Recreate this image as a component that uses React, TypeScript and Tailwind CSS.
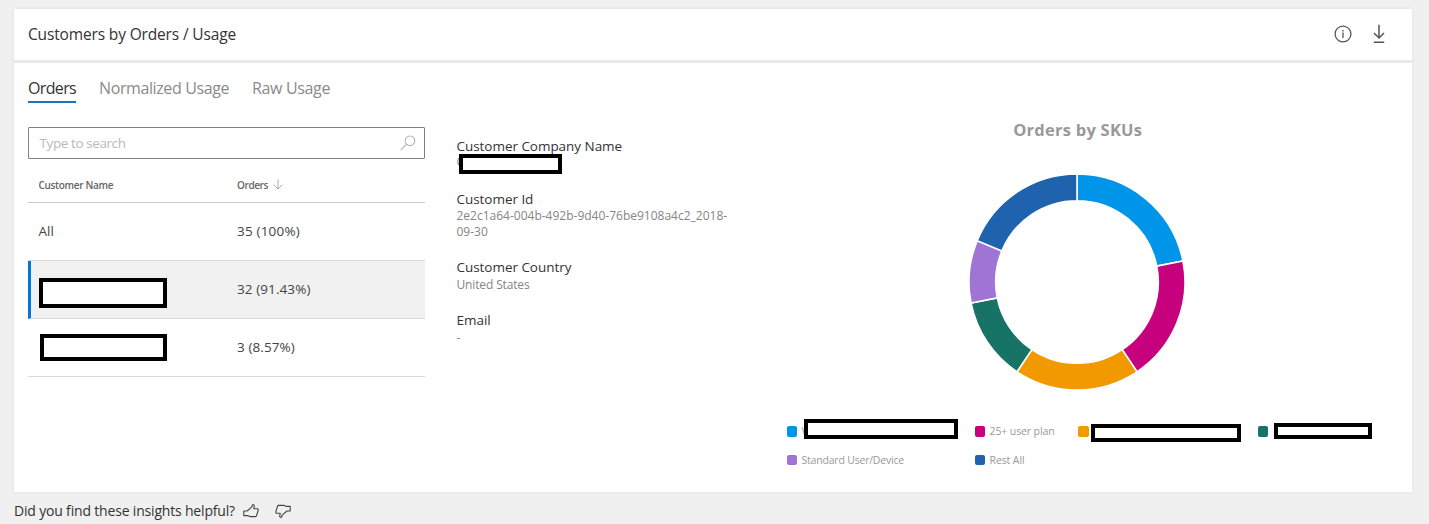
import type { ReactNode } from "react";

const SLICES = [
  { value: 7, color: "#0095e8" },
  { value: 6, color: "#c7007d" },
  { value: 6, color: "#f29900" },
  { value: 4, color: "#177365" },
  { value: 3, color: "#a074d4" },
  { value: 6, color: "#1f63ae" },
];
const TOTAL = 32;

function point(radius: number, share: number) {
  const angle = (share / TOTAL) * Math.PI * 2;
  return `${(108 + radius * Math.sin(angle)).toFixed(2)} ${(108 - radius * Math.cos(angle)).toFixed(2)}`;
}

function Donut() {
  let start = 0;
  return (
    <svg width="216" height="216" viewBox="0 0 216 216" role="img">
      {SLICES.map((slice) => {
        const end = start + slice.value;
        const d = `M${point(108, start)}A108 108 0 0 1 ${point(108, end)}L${point(81.3, end)}A81.3 81.3 0 0 0 ${point(81.3, start)}Z`;
        start = end;
        return <path key={slice.color} d={d} fill={slice.color} stroke="#fff" strokeWidth="1.6" />;
      })}
    </svg>
  );
}

function Redacted({ className }: { className: string }) {
  return <div className={`shrink-0 border-4 border-black bg-white ${className}`} />;
}

function InfoIcon() {
  return (
    <svg width="18" height="18" viewBox="0 0 18 18" fill="none" stroke="#555" strokeWidth="1.3">
      <circle cx="9" cy="9" r="7.9" />
      <path d="M9 7.6V13M9 4.9v1.5" />
    </svg>
  );
}

function DownloadIcon() {
  return (
    <svg width="12" height="20" viewBox="0 0 12 20" fill="none" stroke="#555" strokeWidth="1.5">
      <path d="M6 .8v13.5M1 9l5 5 5-5M.8 18.3h10.4" />
    </svg>
  );
}

function SearchIcon() {
  return (
    <svg width="16" height="16" viewBox="0 0 16 16" fill="none" stroke="#b5b5b5" strokeWidth="1.1">
      <circle cx="10" cy="5.8" r="4.8" />
      <path d="M6.6 9.2.8 15" />
    </svg>
  );
}

function ThumbIcon({ down = false }: { down?: boolean }) {
  return (
    <svg width="16" height="14" viewBox="0 0 16 14" fill="none" stroke="#444" strokeWidth="1.1" strokeLinejoin="round" className={down ? "-scale-100" : ""}>
      <path d="M.8 7h3.2L8.6 3.2 9.4 1c.5-.7 1.9-.3 1.9.7L10.8 4.8h3.6c.7 0 1 .6.8 1.2l-1.6 5.6c-.2.7-.6 1-1.3 1H6.8L4.6 11.6H.8Z" />
    </svg>
  );
}

function CustomerRow({ name, orders, selected = false }: { name: ReactNode; orders: ReactNode; selected?: boolean }) {
  return (
    <div
      className={`flex h-[58px] border-b border-[#d9d9d9] text-[13.5px] leading-[57px] text-[#444] ${selected ? "border-l-[3px] border-l-[#0078d4] bg-[#f1f1f1] pl-[7.5px]" : "pl-[10.5px]"}`}
    >
      <div className="w-[198.5px]">{name}</div>
      <div>{orders}</div>
    </div>
  );
}

function Field({ label, children, className }: { label: string; children: ReactNode; className: string }) {
  return (
    <div className={className}>
      <div className="text-[13.5px] leading-[18px] tracking-[-0.04px] text-[#333]">{label}</div>
      <div className="pt-[1px] text-[12px] leading-[16px] text-[#858585]">{children}</div>
    </div>
  );
}

function LegendItem({ swatch, children }: { swatch: string; children: ReactNode }) {
  return (
    <div className="flex h-[28.5px] items-start">
      <div className={`mt-[7px] h-[10.5px] w-[10.5px] shrink-0 rounded-[2px] ${swatch}`} />
      {children}
    </div>
  );
}

export default function App() {
  return (
    <div className="flex h-[524px] w-[1429px] flex-col overflow-hidden bg-[#f0f0f0] pl-[14px] pt-[9px] font-['Open_Sans','Noto_Sans',sans-serif] whitespace-nowrap">
      <section className="flex h-[483px] w-[1397.5px] shrink-0 flex-col bg-white shadow-[0_0_4px_rgba(0,0,0,0.07)]">
        <header className="flex h-[51px] shrink-0 items-center pl-[14px] pr-[26.5px]">
          <h1 className="flex-1 text-[15.5px] leading-[51px] tracking-[-0.15px] text-[#333]">Customers by Orders / Usage</h1>
          <div className="flex items-center gap-[21px] pb-[2px]">
            <InfoIcon />
            <DownloadIcon />
          </div>
        </header>
        <div className="h-[3px] shrink-0 bg-[#e9e9e9]" />
        <div className="flex flex-1 pl-[14px]">
          <div className="w-[397px] shrink-0 pt-[14px]">
            <nav className="flex h-[50px] items-start text-[16px] leading-[23px] text-[#8a8a8a]">
              <div className="mr-[23px] w-[48px] border-b-2 border-[#1a76bc] pb-[1px] tracking-[-0.65px] text-[#333]">Orders</div>
              <div className="mr-[23px] w-[130px] tracking-[-0.39px]">Normalized Usage</div>
              <div className="tracking-[-0.35px]">Raw Usage</div>
            </nav>
            <div className="flex h-[32px] items-center rounded-[1px] border border-[#808080] pl-[10.5px] pr-[8px] text-[13.5px] tracking-[-0.41px] text-[#bababa]">
              <span className="flex-1">Type to search</span>
              <SearchIcon />
            </div>
            <div className="flex h-[44px] items-center border-b border-[#c8c8c8] pl-[10.5px] pt-[8px] text-[10px] font-semibold leading-[14px] text-[#666]">
              <div className="w-[198.5px] tracking-[-0.32px]">Customer Name</div>
              <div className="w-[36px] tracking-[-0.39px]">Orders</div>
              <svg width="10" height="11" viewBox="0 0 10 11" fill="none" stroke="#aaa" strokeWidth="1">
                <path d="M5 .5v9.5M.7 5.8 5 10l4.3-4.2" />
              </svg>
            </div>
            <CustomerRow name="All" orders={<span className="tracking-[0.19px]">35 (100%)</span>} />
            <CustomerRow
              selected
              name={<Redacted className="mt-[17px] h-[30px] w-[128px]" />}
              orders={<span className="tracking-[0.09px]">32 (91.43%)</span>}
            />
            <CustomerRow
              name={<Redacted className="ml-[1px] mt-[15px] h-[27px] w-[127.5px]" />}
              orders={<span className="tracking-[0.1px]">3 (8.57%)</span>}
            />
          </div>
          <div className="ml-[31.5px] w-[300px] shrink-0 pt-[74px]">
            <Field label="Customer Company Name" className="h-[52.5px]">
              <div className="-mt-[2px] flex">
                <span className="w-[2px]">C</span>
                <Redacted className="h-[19.5px] w-[103.5px]" />
              </div>
            </Field>
            <Field label="Customer Id" className="h-[68.5px]">
              <div className="-mt-[0.5px]">2e2c1a64-004b-492b-9d40-76be9108a4c2_2018-</div>
              <div>09-30</div>
            </Field>
            <Field label="Customer Country" className="h-[52.5px]">
              <div className="tracking-[-0.14px]">United States</div>
            </Field>
            <Field label="Email" className="h-[40px]">
              <div>-</div>
            </Field>
          </div>
          <div className="flex w-[600px] shrink-0 flex-col pt-[55px]">
            <div className="flex flex-col items-center pl-[41.5px]">
              <h2 className="-mr-px h-[56px] text-[16.5px] font-bold leading-[24px] tracking-[0.24px] text-[#999]">Orders by SKUs</h2>
              <Donut />
            </div>
            <div className="ml-[30px] mt-[29px] grid grid-cols-[188px_103.5px_179.5px_120px] text-[10.5px] leading-[25px] text-[#999]">
              <LegendItem swatch="bg-[#0095e8]">
                <span className="ml-[4.5px] w-[2.5px]">V</span>
                <Redacted className="h-[20px] w-[153.5px]" />
              </LegendItem>
              <LegendItem swatch="bg-[#c7007d]">
                <span className="ml-[4.5px] tracking-[-0.11px]">25+ user plan</span>
              </LegendItem>
              <LegendItem swatch="bg-[#f29900]">
                <Redacted className="ml-[2px] mt-[5px] h-[18px] w-[150px]" />
              </LegendItem>
              <LegendItem swatch="bg-[#177365]">
                <Redacted className="ml-[5.5px] mt-[4px] h-[16px] w-[98px]" />
              </LegendItem>
              <LegendItem swatch="bg-[#a074d4]">
                <span className="ml-[4.5px] tracking-[-0.2px]">Standard User/Device</span>
              </LegendItem>
              <LegendItem swatch="bg-[#1f63ae]">
                <span className="ml-[4.5px] tracking-[-0.1px]">Rest All</span>
              </LegendItem>
            </div>
          </div>
        </div>
      </section>
      <footer className="flex h-[37px] shrink-0 items-center text-[14px] tracking-[-0.18px] text-[#333]">
        <span className="w-[228.5px]">Did you find these insights helpful?</span>
        <ThumbIcon />
        <span className="ml-[16px]">
          <ThumbIcon down />
        </span>
      </footer>
    </div>
  );
}
